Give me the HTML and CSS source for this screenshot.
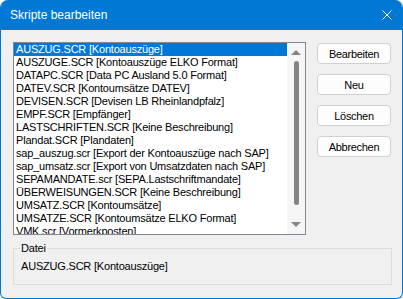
FILE: index.html
```html
<!DOCTYPE html>
<html lang='de'>
  <head>
    <meta charset='UTF-8'/>
    <title>Skripte bearbeiten</title>
    <link rel="stylesheet" href="styles.css">
  </head>
  <body>
    <div class='window'>
      <div class='titlebar'>
        <span class='title'>Skripte bearbeiten</span>
        <svg class='close' width='10' height='10' viewBox='0 0 10 10'>
          <path d='M0.5 0.5 L9.5 9.5 M9.5 0.5 L0.5 9.5' stroke='#ffffff' stroke-width='1' fill='none'/>
        </svg>
      </div>
      <div class='content'>
        <div class='top'>
          <div class='listbox'>
            <ul class='items'>
              <li class='selected'>AUSZUG.SCR [Kontoauszüge]</li>
              <li>AUSZUGE.SCR [Kontoauszüge ELKO Format]</li>
              <li>DATAPC.SCR [Data PC Ausland 5.0 Format]</li>
              <li>DATEV.SCR [Kontoumsätze DATEV]</li>
              <li>DEVISEN.SCR [Devisen LB Rheinlandpfalz]</li>
              <li>EMPF.SCR [Empfänger]</li>
              <li>LASTSCHRIFTEN.SCR [Keine Beschreibung]</li>
              <li>Plandat.SCR [Plandaten]</li>
              <li>sap_auszug.scr [Export der Kontoauszüge nach SAP]</li>
              <li>sap_umsatz.scr [Export von Umsatzdaten nach SAP]</li>
              <li>SEPAMANDATE.scr [SEPA.Lastschriftmandate]</li>
              <li>ÜBERWEISUNGEN.SCR [Keine Beschreibung]</li>
              <li>UMSATZ.SCR [Kontoumsätze]</li>
              <li>UMSATZE.SCR [Kontoumsätze ELKO Format]</li>
              <li>VMK.scr [Vormerkposten]</li>
            </ul>
            <div class='scrollbar'>
              <div class='arrow up'></div>
              <div class='thumb'></div>
              <div class='arrow down'></div>
            </div>
          </div>
          <div class='buttons'>
            <button>Bearbeiten</button>
            <button>Neu</button>
            <button>Löschen</button>
            <button>Abbrechen</button>
          </div>
        </div>
        <div class='group'>
          <div class='group-title'>Datei</div>
          <div class='group-value'>AUSZUG.SCR [Kontoauszüge]</div>
        </div>
      </div>
    </div>
  </body>
</html>
```

FILE: styles.css
```css
body {
  margin: 0;
  background-color: #ffffff;
  font-family: "Liberation Sans", Arial, sans-serif;
}

.window {
  width: 403px;
  height: 299px;
  box-sizing: border-box;
  border: 1px solid #0078d4;
  border-top: none;
  border-radius: 8px 8px 6px 6px;
  background-color: #f0f0f0;
  overflow: hidden;
}

.titlebar {
  height: 30px;
  display: flex;
  align-items: center;
  background-color: #0078d4;
  color: #ffffff;
  font-size: 12px;
  padding-left: 9px;
  padding-right: 10px;
}

.close {
  margin-left: auto;
}

.content {
  padding: 12px 11px 0 12px;
}

.top {
  display: flex;
  align-items: flex-start;
}

.listbox {
  width: 293px;
  height: 193px;
  box-sizing: border-box;
  border: 1px solid #828790;
  background-color: #ffffff;
  display: flex;
  overflow: hidden;
}

.items {
  list-style: none;
  margin: 0;
  padding: 0;
  width: 273px;
  font-size: 11px;
  line-height: 13px;
  letter-spacing: -0.2px;
  color: #000000;
  white-space: nowrap;
  overflow: hidden;
}

.items li {
  padding-left: 2px;
  height: 13px;
}

.items li.selected {
  background-color: #0078d7;
  color: #ffffff;
}

.scrollbar {
  width: 18px;
  background-color: #f6f6f6;
  display: flex;
  flex-direction: column;
  align-items: center;
}

.arrow {
  width: 0;
  height: 0;
  border-left: 5px solid transparent;
  border-right: 5px solid transparent;
}

.arrow.up {
  margin-top: 7px;
  border-bottom: 5px solid #858585;
}

.arrow.down {
  margin-top: auto;
  margin-bottom: 7px;
  border-top: 5px solid #858585;
}

.thumb {
  margin-top: 6px;
  width: 5px;
  height: 144px;
  border-radius: 3px;
  background-color: #858585;
}

.buttons {
  margin-left: 11px;
  margin-top: 1px;
  display: flex;
  flex-direction: column;
  gap: 10px;
}

.buttons button {
  width: 74px;
  height: 21px;
  padding: 0;
  border: 1px solid #d0d0d0;
  border-radius: 4px;
  background-color: #fdfdfd;
  font-family: "Liberation Sans", Arial, sans-serif;
  font-size: 11px;
  letter-spacing: -0.3px;
  color: #000000;
}

.group {
  margin-top: 13px;
  width: 379px;
  height: 37px;
  box-sizing: border-box;
  border: 1px solid #dcdcdc;
  font-size: 11px;
  line-height: 13px;
  letter-spacing: -0.2px;
  color: #000000;
}

.group-title {
  margin-top: -7px;
  margin-left: 6px;
  padding: 0 1px;
  width: fit-content;
  background-color: #f0f0f0;
}

.group-value {
  margin-top: 5px;
  padding-left: 7px;
}
```
